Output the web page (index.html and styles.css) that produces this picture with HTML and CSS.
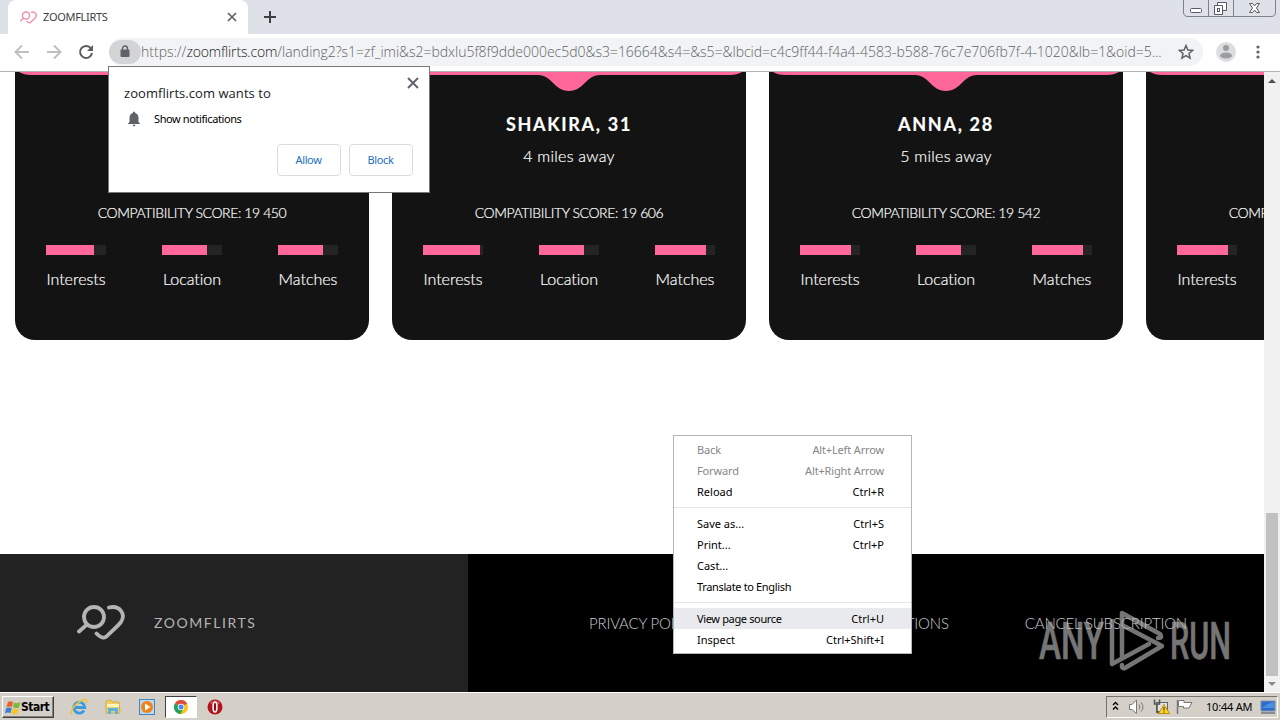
FILE: index.html
```
<!DOCTYPE html>
<html lang="en">
<head>
    <meta charset="UTF-8">
    <title>ZOOMFLIRTS</title>
    <link rel="stylesheet" href="styles.css">
</head>
<body>
    <svg width="0" height="0" class="defs">
        <symbol id="heart" viewBox="0 0 48 35">
            <g fill="none" stroke="currentColor" stroke-width="3.8" stroke-linecap="round">
                <circle cx="17" cy="12" r="10"/>
                <path d="M10 19.500 L2 26.500"/>
                <path d="M32 2.500 C43 0 49 9 44 17 C41 21 35 26 30 31 C27 34 24 33 19.500 28.500"/>
            </g>
        </symbol>
    </svg>

    <div class="tabstrip">
        <div class="tab">
            <svg class="favicon" width="17" height="13"><use href="#heart"/></svg>
            <span class="tab-title">ZOOMFLIRTS</span>
            <svg class="tab-close" width="10" height="10" viewBox="0 0 10 10"><path d="M1 1 L9 9 M9 1 L1 9" stroke="#5f6368" stroke-width="1.7"/></svg>
        </div>
        <svg class="new-tab" width="12" height="12" viewBox="0 0 12 12"><path d="M6 0 V12 M0 6 H12" stroke="#3c4043" stroke-width="2"/></svg>
        <div class="window-buttons">
            <svg width="94" height="18" viewBox="0 0 94 18" fill="none" stroke="#7c828c">
                <path d="M.5 0 V12 Q.5 16.500 5 16.500 H88 Q92.500 16.500 92.500 12 V0 M25.500 0 V16 M50.500 0 V16"/>
                <rect x="7.500" y="8.500" width="11" height="4" rx="1" fill="#fff" stroke="#555b66"/>
                <path d="M34.500 2.500 h9 v8 h-9z" fill="#fff" stroke="#555b66"/>
                <path d="M31.500 5.500 h8 v9 h-8z" fill="#fff" stroke="#555b66"/>
                <rect x="34.500" y="8.500" width="2" height="3" stroke="#555b66"/>
                <path d="M66.500 3.500 h3 l2 2.500 l2 -2.500 h3 l-3 4.500 l3 4.500 h-3 l-2 -2.500 l-2 2.500 h-3 l3 -4.500z" fill="#fff" stroke="#555b66"/>
            </svg>
        </div>
    </div>

    <div class="toolbar">
        <svg class="nav" width="96" height="24" viewBox="0 0 96 24" fill="none" stroke-width="2">
            <path d="M29 12 H16 M22 5.500 L15.500 12 L22 18.500" stroke="#bdbfc2"/>
            <path d="M47 12 H60 M54 5.500 L60.500 12 L54 18.500" stroke="#bdbfc2"/>
            <path d="M91 8.500 A6 6 0 1 0 92 13" stroke="#5a5d61"/>
            <path d="M93 5 V11 H87z" fill="#5a5d61"/>
        </svg>
        <div class="omnibox">
            <div class="lock">
                <svg width="10" height="13" viewBox="0 0 10 13"><rect x="0.500" y="4.500" width="9" height="7.500" rx="1" fill="#5f6368"/><path d="M2.500 5 V3.500 a2.500 2.500 0 0 1 5 0 V5" fill="none" stroke="#5f6368" stroke-width="1.400"/></svg>
            </div>
            <div class="url"><span>https://</span><span class="host">zoomflirts.com</span><span class="path">/landing2?s1=zf_imi&amp;s2=bdxlu5f8f9dde000ec5d0&amp;s3=16664&amp;s4=&amp;s5=&amp;lbcid=c4c9ff44-f4a4-4583-b588-76c7e706fb7f-4-1020&amp;lb=1&amp;oid=5...</span></div>
            <svg class="star" width="16" height="16" viewBox="0 0 16 16"><path d="M8 1.500 L9.900 6 L14.600 6.400 L11 9.500 L12.100 14.200 L8 11.700 L3.900 14.200 L5 9.500 L1.400 6.400 L6.100 6z" fill="none" stroke="#5f6368" stroke-width="1.500"/></svg>
        </div>
        <svg class="avatar" width="20" height="20" viewBox="0 0 20 20"><circle cx="10" cy="10" r="10" fill="#dcdddf"/><circle cx="10" cy="6" r="3" fill="#9a9da1"/><ellipse cx="10" cy="13.500" rx="6" ry="3" fill="#9a9da1"/></svg>
        <svg class="dots" width="4" height="14" viewBox="0 0 4 14" fill="#5f6368"><circle cx="2" cy="2" r="1.600"/><circle cx="2" cy="7" r="1.600"/><circle cx="2" cy="12" r="1.600"/></svg>
    </div>

    <div class="viewport">
        <div class="page">
            <div class="cards" id="cards"></div>
            <div class="footer">
                <div class="brand">
                    <svg width="48" height="35"><use href="#heart"/></svg>
                    <span>ZOOMFLIRTS</span>
                </div>
                <div class="links">
                    <span>PRIVACY POLICY</span>
                    <span>TERMS &amp; CONDITIONS</span>
                    <span>CANCEL SUBSCRIPTION</span>
                </div>
            </div>
        </div>
        <div class="scrollbar">
            <svg width="8" height="4" viewBox="0 0 8 4"><path d="M0 4 L4 0 L8 4z" fill="#505050"/></svg>
            <div class="thumb"></div>
            <svg width="8" height="4" viewBox="0 0 8 4"><path d="M0 0 L4 4 L8 0z" fill="#8a8a8a"/></svg>
        </div>
    </div>

    <div class="taskbar">
        <div class="start">
            <svg width="16" height="15" viewBox="0 0 16 15">
                <path d="M3 2 Q5.500 .5 8 2 L7 7 Q4.500 5.800 1.500 7z" fill="#e8602c"/>
                <path d="M9 2.500 Q12 4 15.500 2 L14 7.500 Q11 8.800 8 7.300z" fill="#7cb83c"/>
                <path d="M1.200 8 Q4 6.800 6.800 8 L5.500 13 Q3 11.800 0 13z" fill="#3d7fd0"/>
                <path d="M7.700 8.300 Q10.500 9.800 13.800 8.500 L12.300 13.500 Q9.500 15 6.500 13.300z" fill="#f8c325"/>
            </svg>
            <span>Start</span>
        </div>
        <div class="quick">
            <svg width="18" height="18" viewBox="0 0 18 18" fill="none">
                <path d="M14 12.500 A5.500 5.500 0 1 1 14.800 9.500 H5" stroke="#3a9be0" stroke-width="2.800"/>
                <path d="M2 16.500 C-1 13 7 3 15 1.500 C17.500 1.500 16.500 4 16 5" stroke="#f2c230" stroke-width="1.500"/>
            </svg>
        </div>
        <div class="quick">
            <svg width="18" height="18" viewBox="0 0 18 18">
                <path d="M2 3 L7 2 L8 4 H15 L16 15 H2z" fill="#f0cf68" stroke="#d5ae48"/>
                <path d="M3 6 H15 V9 H3z" fill="#fff4bd"/>
                <path d="M4 16 V10 H14 V16 H11 V13 H7 V16z" fill="#58b3de"/>
            </svg>
        </div>
        <div class="quick">
            <svg width="16" height="16" viewBox="0 0 16 16">
                <rect x=".5" y=".5" width="15" height="15" fill="#b6d8f0" stroke="#4385bc"/>
                <circle cx="8" cy="8" r="6" fill="#f28218"/>
                <path d="M6 4.500 L11.500 8 L6 11.500z" fill="#fff"/>
            </svg>
        </div>
        <div class="quick active">
            <svg width="14" height="14" viewBox="0 0 14 14">
                <circle cx="7" cy="7" r="7" fill="#fbc116"/>
                <path d="M7 7 L.9 3.500 A7 7 0 0 1 13.100 3.500z" fill="#dd4b3e"/>
                <path d="M7 7 L.9 3.500 A7 7 0 0 0 6.500 14 L9 9z" fill="#1fa15d"/>
                <circle cx="7" cy="7" r="3.300" fill="#fff"/>
                <circle cx="7" cy="7" r="2.500" fill="#4889f0"/>
            </svg>
        </div>
        <div class="quick">
            <svg width="16" height="16" viewBox="0 0 16 16"><circle cx="8" cy="8" r="7.500" fill="#b41420"/><path d="M3 4 A6.500 6.500 0 0 1 13 4 L10 6 H6z" fill="#df5555"/><ellipse cx="8" cy="8" rx="1.900" ry="5" fill="#8f0a12" stroke="#fff" stroke-width="1.600"/></svg>
        </div>
        <div class="tray">
            <svg width="84" height="20" viewBox="0 0 84 20" fill="none">
                <path d="M2 8 L4.500 5.500 L7 8 M2 12.500 L4.500 10 L7 12.500" stroke="#000" stroke-width="1.400"/>
                <path d="M18.500 7.500 H21 L25.500 3 V16.500 L21 12.500 H18.500z" fill="#fff" stroke="#777"/>
                <path d="M28 7.500 Q30 10 28 12.500 M30 5.500 Q34 10 30 14.500" stroke="#777"/>
                <rect x="45.500" y="5.500" width="11" height="9" fill="#dfe3e8" stroke="#666"/>
                <path d="M43.500 2.500 V7 H48.500 V2.500 M46 7 V15.500 H51" stroke="#555" stroke-width="1.500"/>
                <path d="M53 7.500 L58.500 16.500 H47.500z" fill="#ffd42a" stroke="#b99000"/>
                <path d="M53 10 V13.500 M53 14.500 V15.500" stroke="#222"/>
                <path d="M66.500 3 V17" stroke="#777" stroke-width="1.500"/>
                <path d="M67.500 3.500 H73 V5.500 H81 L78 11 H72.500 V9.500 H67.500z" fill="#fff" stroke="#777"/>
            </svg>
            <span class="clock">10:44 AM</span>
            <svg width="16" height="14" viewBox="0 0 16 14"><path d="M1 1 H15 V11 H1z" fill="#2d6cc8" stroke="#7890aa"/><path d="M2 8 Q8 3 14 2 V8z" fill="#4a90e2"/><path d="M1 13 H15" stroke="#3b4d66"/></svg>
        </div>
    </div>

    <div class="permission">
        <svg class="close" width="12" height="12" viewBox="0 0 12 12"><path d="M1 1 L11 11 M11 1 L1 11" stroke="#5f6368" stroke-width="1.900"/></svg>
        <div class="title">zoomflirts.com wants to</div>
        <div class="request">
            <svg width="14" height="16" viewBox="0 0 14 16"><path d="M7 .5 Q8.200 .5 8.200 2 Q11.500 3 11.500 7 V11 L13 12.500 V13 H1 V12.500 L2.500 11 V7 Q2.500 3 5.800 2 Q5.800 .5 7 .5z M5.500 13.800 H8.500 Q8.300 15.300 7 15.300 Q5.700 15.300 5.500 13.800z" fill="#5f6368"/></svg>
            <span>Show notifications</span>
        </div>
        <div class="actions">
            <button>Allow</button>
            <button>Block</button>
        </div>
    </div>

    <div class="context-menu">
        <div class="item disabled"><span>Back</span><span>Alt+Left Arrow</span></div>
        <div class="item disabled"><span>Forward</span><span>Alt+Right Arrow</span></div>
        <div class="item"><span>Reload</span><span>Ctrl+R</span></div>
        <hr>
        <div class="item"><span>Save as...</span><span>Ctrl+S</span></div>
        <div class="item"><span>Print...</span><span>Ctrl+P</span></div>
        <div class="item"><span>Cast...</span></div>
        <div class="item long"><span>Translate to English</span></div>
        <hr>
        <div class="item long hover"><span>View page source</span><span>Ctrl+U</span></div>
        <div class="item"><span>Inspect</span><span>Ctrl+Shift+I</span></div>
    </div>

    <svg class="watermark" width="196" height="64" viewBox="0 0 196 64">
        <text x="1" y="51" textLength="65" lengthAdjust="spacingAndGlyphs">ANY</text>
        <text x="132" y="51" textLength="61" lengthAdjust="spacingAndGlyphs">RUN</text>
        <g fill="none" stroke="#b4b4b4" stroke-width="4.500" stroke-linejoin="round" stroke-linecap="round">
            <path d="M74 13 V56 L111 36"/>
            <path d="M84 50 V5 L122 26 Q125 30 120 30"/>
            <path d="M84 17 L124 38 L87 60 Q83 61 84 57"/>
        </g>
    </svg>

    <script>
        const cards = [
            { name: '', away: '', score: '19 450', bars: [80, 75, 75] },
            { name: 'SHAKIRA, 31', away: '4 miles away', score: '19 606', bars: [95, 75, 85] },
            { name: 'ANNA, 28', away: '5 miles away', score: '19 542', bars: [85, 75, 85] },
            { name: '', away: '', score: '19 450', bars: [85, 75, 85] }
        ];
        const labels = ['Interests', 'Location', 'Matches'];

        document.getElementById('cards').innerHTML = cards.map(card => `
            <div class="card">
                <svg class="wave" width="354" height="20" viewBox="0 0 354 20">
                    <path d="M4 0 Q9 3 16 3 H146 C160 3 162 19 177 19 C192 19 194 3 208 3 H338 Q345 3 350 0z" fill="#ff6699"/>
                </svg>
                <h3>${card.name}</h3>
                <p class="away">${card.away}</p>
                <p class="score">COMPATIBILITY SCORE: ${card.score}</p>
                <div class="stats">
                    ${card.bars.map((value, i) => `
                        <div class="stat">
                            <div class="bar"><div class="fill" style="width: ${value}%"></div></div>
                            <span>${labels[i]}</span>
                        </div>`).join('')}
                </div>
            </div>`).join('');
    </script>
</body>
</html>
```
FILE: styles.css
```
* {
    box-sizing: border-box;
}

body {
    margin: 0;
    width: 1280px;
    height: 720px;
    overflow: hidden;
    position: relative;
    background: #fff;
    color: #000;
    font-family: "Noto Sans", sans-serif;
    font-size: 11px;
}

svg {
    display: block;
    flex-shrink: 0;
}

.defs {
    position: absolute;
}

.tabstrip {
    height: 34px;
    background: #dee1e8;
    display: flex;
    align-items: center;
    padding-left: 8px;
}

.tab {
    width: 240px;
    height: 34px;
    background: #fff;
    border-radius: 8px 8px 0 0;
    display: flex;
    align-items: center;
    padding: 0 11px 0 12px;
}

.favicon {
    color: #ee8aa8;
}

.tab-title {
    margin-left: 6px;
    padding-bottom: 2px;
    color: #3c4043;
    letter-spacing: -0.3px;
}

.tab-close {
    margin-left: auto;
}

.new-tab {
    margin-left: 16px;
}

.window-buttons {
    margin-left: auto;
    margin-right: 3px;
    align-self: flex-start;
}

.toolbar {
    height: 38px;
    border-bottom: 1px solid #b4b4b4;
    display: flex;
    align-items: center;
    padding-bottom: 2px;
}

.nav {
    margin-right: 13px;
}

.omnibox {
    width: 1094px;
    height: 28px;
    border-radius: 14px;
    background: #f1f3f4;
    display: flex;
    align-items: center;
    margin-right: 13px;
    padding-right: 9px;
}

.lock {
    width: 32px;
    height: 24px;
    border-radius: 12px;
    background: #d2d4d6;
    display: flex;
    align-items: center;
    justify-content: center;
}

.url {
    flex: 1;
    display: flex;
    font-family: "Open Sans", sans-serif;
    font-weight: 300;
    font-size: 14px;
    line-height: 20px;
    white-space: nowrap;
    color: #5f6368;
}

.host {
    color: #202124;
    letter-spacing: -0.15px;
}

.path {
    letter-spacing: -0.02px;
}

.dots {
    margin-left: 20px;
}

.viewport {
    height: 620px;
    display: flex;
}

.page {
    width: 1264px;
    overflow: hidden;
}

.cards {
    height: 482px;
    display: flex;
    align-items: flex-start;
    gap: 23px;
    padding-left: 15px;
}

.card {
    flex: 0 0 354px;
    height: 268px;
    background: #131313;
    border-radius: 0 0 20px 20px;
    color: #fff;
    text-align: center;
    font-family: Lato, sans-serif;
    font-weight: 300;
    font-variant-ligatures: none;
    -webkit-text-stroke: 0.2px #fff;
}

.card h3 {
    height: 24px;
    margin: 20px 0 0;
    font-size: 18px;
    line-height: 24px;
    letter-spacing: 1.7px;
}

.card p {
    margin: 0;
    height: 20px;
    line-height: 20px;
}

.card .away {
    margin-top: 10px;
    font-size: 16px;
    letter-spacing: 0.25px;
}

.card .score {
    margin-top: 37px;
    font-size: 14px;
    letter-spacing: -0.4px;
}

.stats {
    display: flex;
    justify-content: space-between;
    padding: 22px 31px 0;
}

.stat {
    width: 60px;
    display: flex;
    flex-direction: column;
    align-items: center;
    font-size: 16px;
    line-height: 20px;
    white-space: nowrap;
}

.bar {
    width: 60px;
    height: 10px;
    background: #242424;
    margin-bottom: 14px;
}

.fill {
    height: 10px;
    background: #ff6699;
}

.footer {
    height: 138px;
    display: flex;
    background: #000;
    font-family: Lato, sans-serif;
    color: #b4b4b4;
}

.brand {
    width: 468px;
    background: #222;
    display: flex;
    align-items: center;
    padding: 0 0 1px 77px;
    gap: 29px;
    font-size: 14px;
    letter-spacing: 1.55px;
}

.links {
    flex: 1;
    display: flex;
    align-items: center;
    gap: 76px;
    padding: 0 77px 1px 121px;
    font-size: 15px;
    font-weight: 300;
    letter-spacing: -0.17px;
    white-space: nowrap;
    color: #ccc;
}

.links span:first-child {
    margin-right: auto;
}

.scrollbar {
    width: 16px;
    background: #f1f1f1;
    display: flex;
    flex-direction: column;
    align-items: center;
    justify-content: flex-end;
    padding: 7px 0 6px;
}

.scrollbar svg:first-child {
    margin-bottom: auto;
}

.thumb {
    width: 12px;
    height: 163px;
    background: #c1c1c1;
    margin-bottom: 6px;
}

.taskbar {
    height: 28px;
    background: #d4cfc7;
    border-top: 1px solid #fff;
    display: flex;
    align-items: center;
    padding: 1px 2px 0;
}

.start {
    width: 52px;
    height: 22px;
    border: 1px solid;
    border-color: #fff #404040 #404040 #fff;
    box-shadow: inset -1px -1px #858079;
    display: flex;
    align-items: center;
    padding-left: 2px;
    font-family: "DejaVu Sans Condensed", "DejaVu Sans", sans-serif;
    font-weight: bold;
    font-size: 12px;
    margin-right: 8px;
}

.start span {
    letter-spacing: -0.5px;
}

.quick {
    width: 34px;
    height: 22px;
    display: flex;
    align-items: center;
    justify-content: center;
}

.quick.active {
    width: 32px;
    background: #fff;
    border: 1px solid;
    border-color: #404040 #fff #fff #404040;
    margin: 0 1px;
}

.tray {
    width: 172px;
    height: 22px;
    margin-left: auto;
    border: 1px solid;
    border-color: #77736c #fff #fff #77736c;
    display: flex;
    align-items: center;
    padding: 0 1px 0 4px;
}

.clock {
    margin-left: 11px;
    margin-right: auto;
    padding-bottom: 1px;
    letter-spacing: -0.2px;
    white-space: nowrap;
}

.permission {
    position: absolute;
    left: 108px;
    top: 66px;
    width: 322px;
    height: 127px;
    border: 1px solid #777;
    background: #fff;
    padding: 16px 16px 0 15px;
}

.permission .close {
    position: absolute;
    right: 10px;
    top: 10px;
}

.permission .title {
    font-family: "Open Sans", sans-serif;
    font-size: 13px;
    line-height: 20px;
    letter-spacing: 0.05px;
    color: #202124;
}

.request {
    display: flex;
    align-items: center;
    gap: 13px;
    height: 16px;
    margin: 8px 0 17px 3px;
}

.request span {
    padding-bottom: 2px;
    letter-spacing: -0.4px;
}

.actions {
    display: flex;
    justify-content: flex-end;
    gap: 8px;
}

.actions button {
    width: 64px;
    height: 32px;
    border: 1px solid #dadce0;
    border-radius: 4px;
    background: #fff;
    color: #1a6fc0;
    font-family: "Noto Sans", sans-serif;
    font-size: 11px;
    letter-spacing: -0.4px;
    padding: 0 1px 2px 0;
}

.context-menu {
    position: absolute;
    left: 673px;
    top: 435px;
    width: 239px;
    height: 219px;
    border: 1px solid #b5b5b5;
    background: #fff;
    padding-top: 3px;
}

.item {
    height: 21px;
    line-height: 21px;
    padding: 0 27px 0 23px;
    display: flex;
    justify-content: space-between;
}

.long span:first-child {
    letter-spacing: -0.35px;
}

.disabled {
    color: #85878a;
    letter-spacing: -0.15px;
}

.hover {
    background: #e8eaed;
}

hr {
    margin: 5px 0;
    border: 0;
    height: 1px;
    background: #e5e5e5;
}

.watermark {
    position: absolute;
    left: 1038px;
    top: 608px;
    opacity: 0.65;
}

.watermark text {
    font-family: Roboto, sans-serif;
    font-size: 52px;
    font-weight: 500;
    fill: #b4b4b4;
    stroke: #b4b4b4;
    stroke-width: 0.6px;
}
```
